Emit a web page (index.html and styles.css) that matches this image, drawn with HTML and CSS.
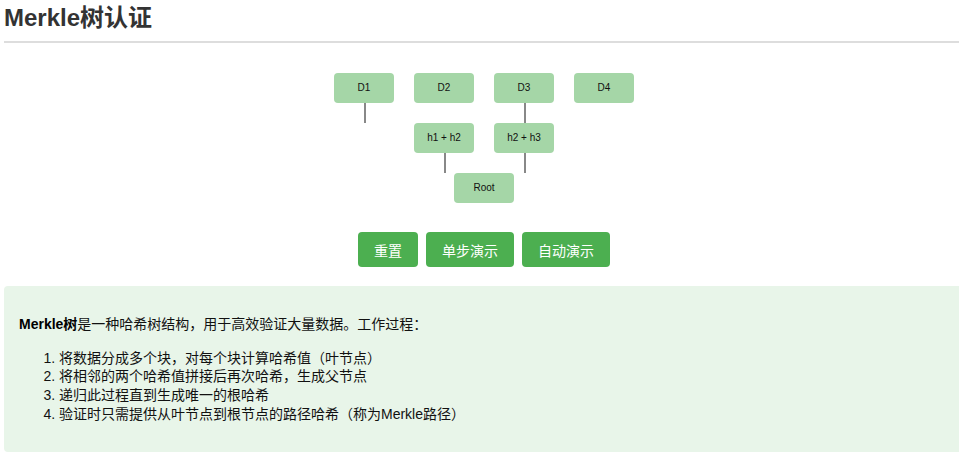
FILE: index.html
```html
<!DOCTYPE html>
<html>
<head>
	<meta http-equiv="Content-Type" content="text/html; charset=utf-8">
	<title>Merkle树认证</title>
	<link rel="stylesheet" href="styles.css">
</head>
<body>
	<div class="page">
		<h1 class="title">Merkle树认证</h1>

		<div class="tree">
			<div class="node n-d1">D1</div>
			<div class="node n-d2">D2</div>
			<div class="node n-d3">D3</div>
			<div class="node n-d4">D4</div>
			<div class="node n-h12">h1 + h2</div>
			<div class="node n-h23">h2 + h3</div>
			<div class="node n-root">Root</div>

			<div class="edge e-d1"></div>
			<div class="edge e-d3"></div>
			<div class="edge e-h12"></div>
			<div class="edge e-h23"></div>
		</div>

		<div class="controls">
			<button class="btn" id="j-reset">重置</button>
			<button class="btn" id="j-step">单步演示</button>
			<button class="btn" id="j-auto">自动演示</button>
		</div>

		<div class="info">
			<p><strong>Merkle树</strong>是一种哈希树结构，用于高效验证大量数据。工作过程：</p>
			<ol>
				<li>将数据分成多个块，对每个块计算哈希值（叶节点）</li>
				<li>将相邻的两个哈希值拼接后再次哈希，生成父节点</li>
				<li>递归此过程直到生成唯一的根哈希</li>
				<li>验证时只需提供从叶节点到根节点的路径哈希（称为Merkle路径）</li>
			</ol>
		</div>
	</div>
</body>
</html>
```

FILE: styles.css
```css
* {padding: 0; margin: 0; box-sizing: border-box;}
html, body {overflow: hidden;}
body {background: #fff; color: #111; font-family: "Liberation Sans", "Noto Sans CJK SC", sans-serif; font-size: 14px;}

.page {width: 964px; padding-left: 4px;}

.title {font-size: 24px; line-height: 30px; font-weight: bold; color: #333; padding: 3px 0 8px; border-bottom: 2px solid #ddd;}

/* tree diagram: nodes placed on a small canvas */
.tree {position: relative; width: 300px; height: 130px; margin: 30px auto 0;}
.node {position: absolute; width: 60px; height: 30px; line-height: 30px; text-align: center; background: #a5d6a7; border-radius: 4px; font-size: 10px; color: #111;}
.n-d1 {left: 0; top: 0;}
.n-d2 {left: 80px; top: 0;}
.n-d3 {left: 160px; top: 0;}
.n-d4 {left: 240px; top: 0;}
.n-h12 {left: 80px; top: 50px;}
.n-h23 {left: 160px; top: 50px;}
.n-root {left: 120px; top: 100px;}

.edge {position: absolute; width: 2px; height: 20px; background: #888;}
.e-d1 {left: 30px; top: 30px;}
.e-d3 {left: 190px; top: 30px;}
.e-h12 {left: 110px; top: 80px;}
.e-h23 {left: 190px; top: 80px;}

.controls {display: flex; justify-content: center; gap: 8px; margin-top: 29px;}
.btn {height: 35px; padding: 0 16px; border: 0; border-radius: 4px; background: #4caf50; color: #fff; font-family: inherit; font-size: 14px; cursor: pointer;}

.info {margin-top: 19px; padding: 15px; background: #e8f5e9; border-radius: 4px; line-height: 18.7px;}
.info p {margin: 14px 0 15px;}
.info strong {color: #000;}
.info ol {padding-left: 40px; margin-bottom: 13px;}
```
